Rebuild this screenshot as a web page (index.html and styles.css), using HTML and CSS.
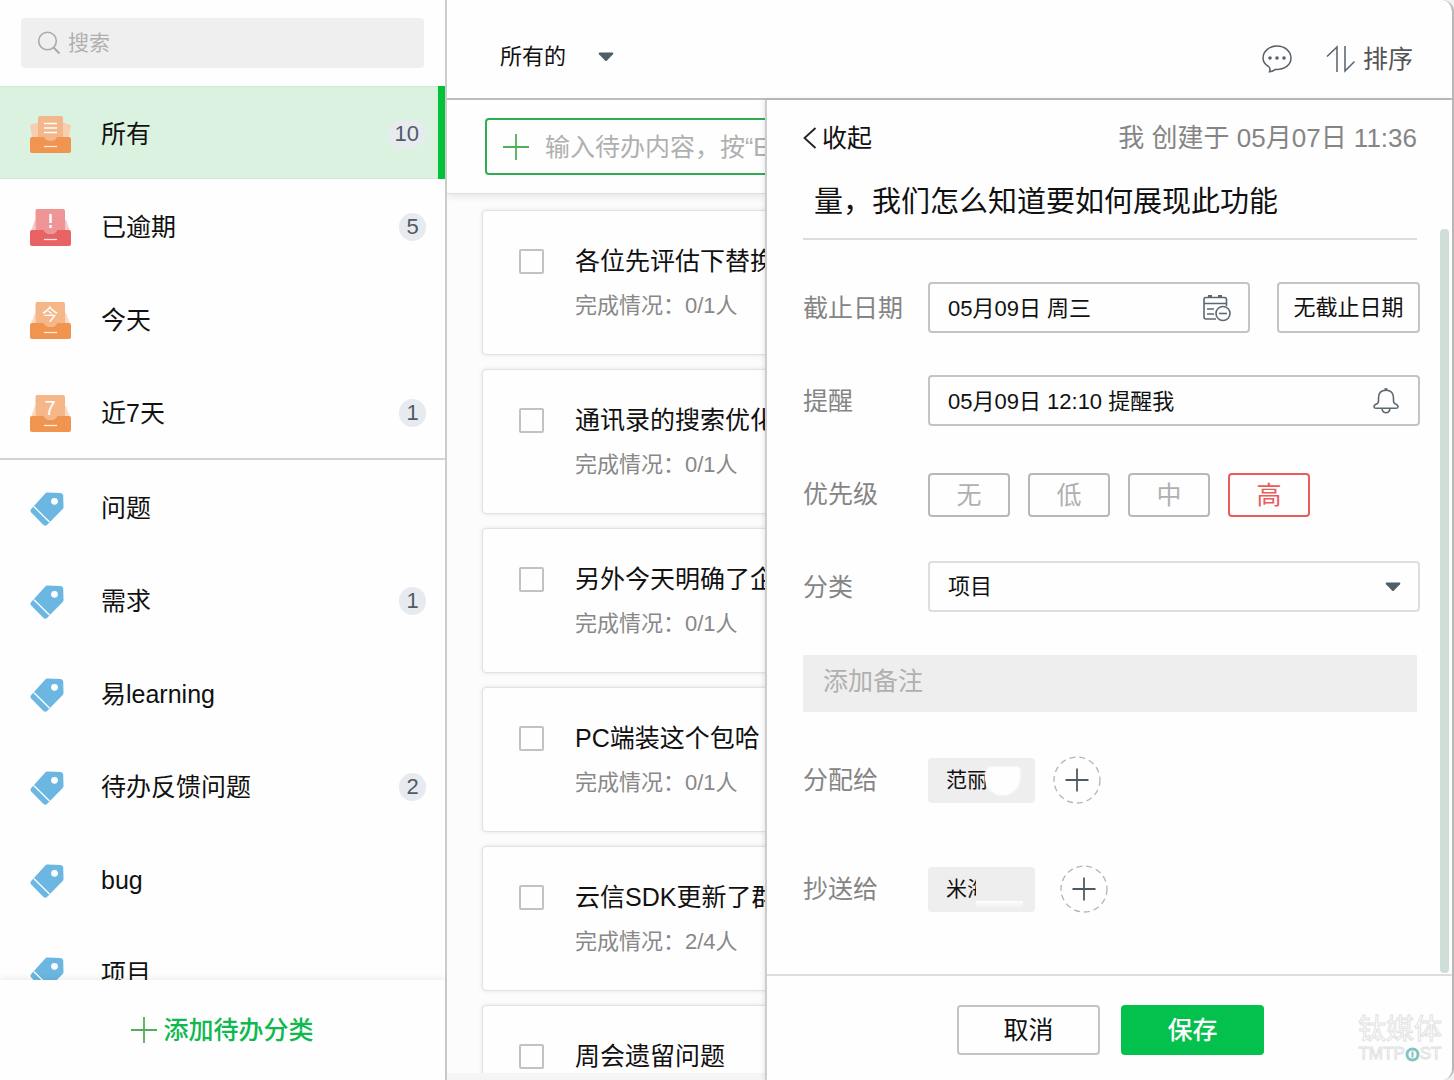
FILE: index.html
```html
<!DOCTYPE html>
<html lang="zh-CN">
<head>
<meta charset="utf-8">
<meta name="viewport" content="width=device-width, initial-scale=1">
<title>待办</title>
<link rel="stylesheet" href="styles.css">
</head>
<body>
<svg class="symbols" aria-hidden="true">
  <symbol id="tray" viewBox="0 0 41 38">
    <path d="M5 11H36L40 22H1Z" fill="currentColor" opacity=".35"/>
    <path d="M7 0H33Q35 0 35 2V22H26Q25 26 20.500 26T15 22H5.500V2Q5.500 0 7 0Z" fill="#fff"/>
    <path d="M2 21H14Q15.500 25 20.500 25T27 21H39Q41 21 41 23V35Q41 37 39 37H2Q0 37 0 35V23Q0 21 2 21Z" fill="currentColor"/>
    <path d="M7 0H33Q35 0 35 2V21H27Q25.500 25 20.500 25T14 21H5.500V2Q5.500 0 7 0Z" fill="currentColor" opacity=".68"/>
    <path d="M14 30.500H27" stroke="#fff" stroke-width="1.300" opacity=".85"/>
  </symbol>
  <symbol id="tag" viewBox="0 0 35 35">
    <path d="M17 .5L30.500 1Q33 1.200 33.200 3.500L33.500 15Q33.500 16 32.700 17L17 33Q15.300 34.500 13.500 33L1.200 20.500Q-.3 18.800 1.200 17L15.500 1.200Q16.200.5 17 .5Z" fill="#6bb7e2"/>
    <circle cx="24.500" cy="9.300" r="3.400" fill="#fff"/>
    <path d="M3.700 14.500L19.500 30" stroke="#fff" stroke-width="1.300"/>
  </symbol>
  <symbol id="plus" viewBox="0 0 26 26">
    <path d="M13 0V26M0 13H26" stroke="currentColor" stroke-width="1.800"/>
  </symbol>
  <symbol id="caret" viewBox="0 0 16 10">
    <path d="M1.500.5H14.500Q16 .8 15 2.200L9 8.500Q8 9.500 7 8.500L1 2.200Q0 .8 1.500.5Z" fill="#505e68"/>
  </symbol>
</svg>
<div class="app">
  <aside class="sidebar">
    <div class="search">
      <svg width="24" height="24" viewBox="0 0 24 24" fill="none" stroke="#a9a9a9" stroke-width="1.600"><circle cx="10.500" cy="10" r="8.800"/><path d="M16.500 16.500L22.500 22.500" stroke-width="2"/></svg>
      <input type="search" placeholder="搜索" aria-label="搜索">
    </div>
    <nav class="menu">
      <a class="item active" href="#all">
        <span class="item-icon"><svg class="orange" width="41" height="38" viewBox="0 0 41 38">
          <path d="M0 9L9 6V21H2ZM41 9L32 6V21H39Z" fill="#f8cfae"/>
          <path d="M10 0H31Q33 0 33 2V26H8V2Q8 0 10 0Z" fill="#f3b78c"/>
          <path d="M2 21H14Q15.500 25 20.500 25T27 21H39Q41 21 41 23V35Q41 37 39 37H2Q0 37 0 35V23Q0 21 2 21Z" fill="currentColor"/>
          <path d="M14 7.500H27M14 12H27M14 16.500H27" stroke="#fff" stroke-width="1.500"/><path d="M14 30.500H27" stroke="#fff" stroke-width="1.300" opacity=".8"/>
        </svg></span>
        <span class="item-name">所有</span><span class="badge">10</span>
      </a>
      <a class="item" href="#overdue">
        <span class="item-icon"><svg class="red" width="41" height="38" viewBox="0 0 41 38"><use href="#tray"/><path d="M20.500 5V14M20.500 16V19" stroke="#fff" stroke-width="2.500"/></svg></span>
        <span class="item-name">已逾期</span><span class="badge">5</span>
      </a>
      <a class="item" href="#today">
        <span class="item-icon"><svg class="orange" width="41" height="38" viewBox="0 0 41 38"><use href="#tray"/><text x="20" y="18" class="tray-text">今</text></svg></span>
        <span class="item-name">今天</span>
      </a>
      <a class="item" href="#week">
        <span class="item-icon"><svg class="orange" width="41" height="38" viewBox="0 0 41 38"><use href="#tray"/><text x="20" y="20" class="tray-text tray-digit">7</text></svg></span>
        <span class="item-name">近7天</span><span class="badge">1</span>
      </a>
      <div class="divider"></div>
      <a class="item" href="#c1"><span class="item-icon"><svg width="35" height="35"><use href="#tag"/></svg></span><span class="item-name">问题</span></a>
      <a class="item" href="#c2"><span class="item-icon"><svg width="35" height="35"><use href="#tag"/></svg></span><span class="item-name">需求</span><span class="badge">1</span></a>
      <a class="item" href="#c3"><span class="item-icon"><svg width="35" height="35"><use href="#tag"/></svg></span><span class="item-name">易learning</span></a>
      <a class="item" href="#c4"><span class="item-icon"><svg width="35" height="35"><use href="#tag"/></svg></span><span class="item-name">待办反馈问题</span><span class="badge">2</span></a>
      <a class="item" href="#c5"><span class="item-icon"><svg width="35" height="35"><use href="#tag"/></svg></span><span class="item-name">bug</span></a>
      <a class="item" href="#c6"><span class="item-icon"><svg width="35" height="35"><use href="#tag"/></svg></span><span class="item-name">项目</span></a>
    </nav>
    <button class="add-category" type="button"><svg width="26" height="26"><use href="#plus"/></svg>添加待办分类</button>
  </aside>

  <main class="main">
    <header class="topbar">
      <button class="filter" type="button">所有的<svg width="16" height="10"><use href="#caret"/></svg></button>
      <div class="tools">
        <button class="tool" type="button" aria-label="消息">
          <svg width="30" height="28" viewBox="0 0 30 28" fill="none" stroke="#56616a" stroke-width="1.500"><path d="M6.500 21.500C3 19.500 1 16.500 1 13C1 6.500 7 1 15 1S29 6.500 29 13S23 24.500 15 24.500C14.500 24.500 14 24.500 13.500 24.400C11.500 26 9.500 26.700 7.500 26.700C8.200 25 8 22.700 6.500 21.500Z"/><g fill="#56616a" stroke="none"><circle cx="8" cy="13" r="1.800"/><circle cx="15" cy="13" r="1.800"/><circle cx="22" cy="13" r="1.800"/></g></svg>
        </button>
        <button class="tool" type="button"><svg width="29" height="28" viewBox="0 0 29 28" fill="none" stroke="#56616a" stroke-width="1.500"><path d="M1 11.500L11 2V27M19 1V26L28.500 16.500"/></svg>排序</button>
      </div>
    </header>
    <div class="content">
      <section class="list">
        <div class="new-bar">
          <div class="new-task"><svg width="26" height="26"><use href="#plus"/></svg><input type="text" placeholder="输入待办内容，按“Enter”键" aria-label="新待办"></div>
        </div>
        <ul class="cards">
          <li class="card"><input type="checkbox" id="t1"><div><label for="t1">各位先评估下替换</label><p>完成情况：0/1人</p></div></li>
          <li class="card"><input type="checkbox" id="t2"><div><label for="t2">通讯录的搜索优化</label><p>完成情况：0/1人</p></div></li>
          <li class="card"><input type="checkbox" id="t3"><div><label for="t3">另外今天明确了企</label><p>完成情况：0/1人</p></div></li>
          <li class="card"><input type="checkbox" id="t4"><div><label for="t4">PC端装这个包哈</label><p>完成情况：0/1人</p></div></li>
          <li class="card"><input type="checkbox" id="t5"><div><label for="t5">云信SDK更新了群</label><p>完成情况：2/4人</p></div></li>
          <li class="card"><input type="checkbox" id="t6"><div><label for="t6">周会遗留问题</label></div></li>
        </ul>
        <div class="list-foot"></div>
      </section>

      <form class="detail">
        <div class="fields">
          <div class="detail-head inset">
            <button class="collapse" type="button"><svg width="14" height="22" viewBox="0 0 14 22" fill="none" stroke="#222" stroke-width="1.800"><path d="M12.500 1L1.500 11L12.500 21"/></svg>收起</button>
            <span class="meta">我 创建于 05月07日 11:36</span>
          </div>
          <h1 class="title inset">量，我们怎么知道要如何展现此功能</h1>
          <div class="row">
            <label for="due">截止日期</label>
            <div class="control">
              <input id="due" type="text" value="05月09日 周三">
              <svg class="date-icon" width="28" height="28" viewBox="0 0 28 28" fill="none" stroke="#5b6971" stroke-width="1.600"><path d="M13 24H3Q1 24 1 22V4.500Q1 2.500 3 2.500H21.500Q23.500 2.500 23.500 4.500V11M1 8.500H23.500M4 14H11M4 19H11"/><path d="M5 1.300H9M15 1.300H19" stroke-width="2.500"/><circle cx="20" cy="18.500" r="7" fill="#fff"/><path d="M16 18.500H24"/></svg>
            </div>
            <button class="no-due" type="button">无截止日期</button>
          </div>
          <div class="row">
            <label for="remind">提醒</label>
            <div class="control">
              <input id="remind" type="text" value="05月09日 12:10 提醒我">
              <svg class="bell-icon" width="26" height="26" viewBox="0 0 26 26" fill="none" stroke="#5b6971" stroke-width="1.600"><path d="M5.500 13V10Q5.500 2.200 13 2.200T20.500 10V13Q20.500 15.500 23.500 16.500Q25.200 17.500 25 19Q24.800 20.300 23 20.300H3Q1.200 20.300 1 19Q.8 17.500 2.500 16.500Q5.500 15.500 5.500 13Z"/><path d="M11.500 1.300H14.500" stroke-width="2.200"/><path d="M9 21Q10 24.800 13 24.800T17 21"/></svg>
            </div>
          </div>
          <div class="row">
            <span class="row-name" id="prio">优先级</span>
            <div class="levels" role="group" aria-labelledby="prio">
              <button type="button">无</button><button type="button">低</button><button type="button">中</button><button class="high" type="button" aria-pressed="true">高</button>
            </div>
          </div>
          <div class="row">
            <label for="cat">分类</label>
            <div class="control">
              <select id="cat"><option>项目</option></select>
              <svg class="caret-icon" width="16" height="10"><use href="#caret"/></svg>
            </div>
          </div>
          <input class="note" type="text" placeholder="添加备注" aria-label="添加备注">
          <div class="row people">
            <span class="row-name">分配给</span>
            <span class="chip">范丽<i class="blot"></i></span>
            <button class="round" type="button" aria-label="添加分配人"><svg width="48" height="48" viewBox="0 0 48 48" fill="none"><circle cx="24" cy="24" r="23" stroke="#b4b4b4" stroke-width="1.300" stroke-dasharray="6 4"/><path d="M24 12.500V35.500M12.500 24H35.500" stroke="#4f5b63" stroke-width="1.800"/></svg></button>
          </div>
          <div class="row people copies">
            <span class="row-name">抄送给</span>
            <span class="chip">米海<i class="wipe"></i></span>
            <button class="round" type="button" aria-label="添加抄送人"><svg width="48" height="48" viewBox="0 0 48 48" fill="none"><circle cx="24" cy="24" r="23" stroke="#b4b4b4" stroke-width="1.300" stroke-dasharray="6 4"/><path d="M24 12.500V35.500M12.500 24H35.500" stroke="#4f5b63" stroke-width="1.800"/></svg></button>
          </div>
          <div class="scroll-thumb"></div>
        </div>
        <footer class="actions">
          <button class="cancel" type="button">取消</button>
          <button class="save" type="submit">保存</button>
          <div class="watermark"><span class="mark-cn">钛媒体</span><span class="mark-en">TMTP<svg width="15" height="15" viewBox="0 0 15 15"><circle cx="7.500" cy="7.500" r="5.500" fill="#fff" stroke="#82c4c3" stroke-width="3"/><path d="M7.500 4.500V10.500" stroke="#82c4c3" stroke-width="2"/></svg>ST</span></div>
        </footer>
      </form>
    </div>
  </main>
</div>
</body>
</html>
```
FILE: styles.css
```css
* { box-sizing: border-box; }
body {
  margin: 0;
  background: #f1f1f1;
  color: #111;
  font-family: "Liberation Sans", "Noto Sans CJK SC", sans-serif;
  font-size: 25px;
  line-height: 32px;
}
button, input, select { font: inherit; color: inherit; border: 0; padding: 0; background: none; outline: 0; }
button { cursor: pointer; }
a { color: inherit; text-decoration: none; }
svg { display: block; flex: none; }
::placeholder { color: #b0b0b0; opacity: 1; }
.symbols { position: absolute; width: 0; height: 0; }

.app {
  display: flex;
  height: 100vh;
  overflow: hidden;
  background: #fefefe;
  border-right: 2px solid #b8b8b8;
  border-radius: 0 12px 12px 0;
}

/* sidebar */
.sidebar { flex: none; width: 447px; display: flex; flex-direction: column; border-right: 2px solid #ccc; }
.search { flex: none; display: flex; align-items: center; gap: 7px; height: 50px; margin: 18px 21px; padding: 0 16px; background: #efefef; border-radius: 4px; }
.search input { flex: 1; min-width: 0; font-size: 21px; appearance: none; }
.menu { flex: 1; min-height: 0; overflow: hidden; }
.item { display: flex; align-items: center; height: 93px; padding: 3px 19px 0 30px; }
.item.active { background: #dcf2e1; box-shadow: inset -7px 0 #04c13a, inset 0 1px #cfe8d5, inset 0 -1px #cfe8d5; }
.item-icon { flex: none; width: 71px; padding-top: 2px; }
.item-name { flex: 1; }
.orange { color: #f0954f; }
.red { color: #e86363; }
.tray-text { fill: #fff; font-size: 16px; text-anchor: middle; }
.tray-digit { font-size: 20px; }
.badge { min-width: 27px; padding: 0 7px; border-radius: 14px; background: #e7ebf0; color: #505b66; font-size: 22px; line-height: 28px; text-align: center; }
.divider { height: 2px; background: #d2d2d2; }
.add-category {
  flex: none; display: flex; align-items: center; justify-content: center; gap: 6px;
  height: 100px; color: #10b850; font-weight: 500; box-shadow: 0 -2px 6px #00000012;
}
.add-category svg { color: #4fae59; }

/* main area */
.main { flex: 1; min-width: 0; display: flex; flex-direction: column; }
.topbar { flex: none; display: flex; align-items: center; justify-content: space-between; height: 100px; padding: 16px 39px 0 53px; border-bottom: 2px solid #bdbdbd; }
.filter { display: flex; align-items: center; gap: 32px; font-size: 22px; }
.tools { display: flex; gap: 34px; padding-top: 3px; color: #555; }
.tool { display: flex; align-items: center; gap: 8px; }
.content { flex: 1; min-height: 0; display: flex; }

/* task list */
.list { flex: none; width: 318px; display: flex; flex-direction: column; overflow: hidden; background: #fcfcfc; }
.new-bar { flex: none; height: 94px; padding: 18px 0 0 38px; background: #fefefe; border-bottom: 1px solid #e0e0e0; box-shadow: 0 2px 8px #0000001a; }
.new-task { display: flex; align-items: center; gap: 16px; height: 57px; margin-right: -20px; padding-left: 16px; border: 2px solid #2eae52; border-radius: 4px; }
.new-task svg { color: #4fae59; }
.new-task input { flex: 1; min-width: 0; }
.cards { flex: 1; min-height: 0; display: flex; flex-direction: column; gap: 14px; margin: 0; padding: 16px 0 0 35px; list-style: none; overflow: hidden; }
.card { flex: none; display: flex; gap: 31px; height: 145px; margin-right: -20px; padding: 34px 0 0 36px; background: #fefefe; border: 1px solid #e2e2e2; border-radius: 4px; box-shadow: 0 0 4px #0000001a; }
.card input { flex: none; appearance: none; width: 25px; height: 25px; margin: 4px 0 0; border: 2px solid #c2c2c2; border-radius: 2px; }
.card label { white-space: nowrap; }
.card p { margin: 13px 0 0; font-size: 22px; color: #888; white-space: nowrap; }
.list-foot { flex: none; height: 7px; background: #f5f5f5; }

/* detail panel */
.detail { flex: 1; min-width: 0; display: flex; flex-direction: column; border-left: 2px solid #ccc; box-shadow: -1px 0 5px #0000001a; background: #fefefe; }
.fields { position: relative; flex: 1; min-height: 0; overflow: hidden; padding: 20px 32px 0 36px; }
.inset { margin-right: 3px; }
.detail-head { display: flex; justify-content: space-between; line-height: 36px; }
.collapse { display: flex; align-items: center; gap: 5px; }
.meta { color: #858585; font-size: 26px; }
.title { margin-top: 24px; margin-bottom: 0; padding: 0 0 14px 11px; border-bottom: 2px solid #ddd; font-size: 29px; font-weight: 400; line-height: 44px; }
.row { display: flex; align-items: center; height: 51px; margin-top: 42px; }
.row > label, .row-name { flex: none; width: 125px; color: #858585; }
.control { position: relative; flex: 1; min-width: 0; height: 51px; }
.control input, .control select { width: 100%; height: 100%; padding: 0 18px; border: 2px solid #c4c4c4; border-radius: 4px; font-size: 22px; }
.control input { padding-bottom: 3px; }
.control select { appearance: none; border-color: #dedede; }
.control svg { position: absolute; pointer-events: none; }
.date-icon { right: 19px; top: 13px; }
.bell-icon { right: 21px; top: 13px; }
.caret-icon { right: 19px; top: 21px; }
.no-due { flex: none; width: 143px; height: 51px; margin-left: 27px; border: 2px solid #c4c4c4; border-radius: 4px; font-size: 22px; }
.levels { display: flex; gap: 18px; padding-top: 3px; }
.levels button { width: 82px; height: 44px; border: 2px solid #b8b8b8; border-radius: 4px; color: #b0b0b0; }
.levels .high { border-color: #e95c5c; color: #e95c5c; }
.note { display: block; width: calc(100% - 3px); height: 57px; margin-top: 43px; padding: 0 20px 4px; background: #eee; }
.people { height: 48px; margin-top: 44px; }
.copies { margin-top: 61px; }
.chip { position: relative; width: 107px; height: 45px; padding-left: 18px; border-radius: 4px; background: #eee; font-size: 21px; line-height: 43px; }
.blot { position: absolute; left: 57px; top: 9px; width: 35px; height: 28px; background: #fefefe; border-radius: 8px 4px 18px 18px; box-shadow: 0 0 3px #fefefe; }
.wipe { position: absolute; left: 48px; top: 8px; width: 47px; height: 33px; background: linear-gradient(#eee 26px, #fefefe 26px, #eee 33px); }
.round { flex: none; margin-left: 18px; border-radius: 50%; }
.copies .round { margin-left: 25px; }
.scroll-thumb { position: absolute; right: 3px; top: 129px; bottom: 1px; width: 9px; border-radius: 4px; background: #cfded7; }
.actions { position: relative; flex: none; display: flex; justify-content: center; gap: 21px; height: 106px; padding: 29px 0 0 2px; border-top: 2px solid #ddd; }
.actions button { width: 143px; height: 50px; border-radius: 4px; }
.cancel { border: 2px solid #c4c4c4; }
.save { background: #04c04c; color: #fff; font-weight: 500; }
.watermark { position: absolute; right: 10px; bottom: 18px; display: flex; flex-direction: column; align-items: center; color: #fff; -webkit-text-stroke: 1px #e2e2e2; }
.mark-cn { font-size: 28px; line-height: 32px; }
.mark-en { display: flex; align-items: center; font-size: 17px; line-height: 16px; }
```
